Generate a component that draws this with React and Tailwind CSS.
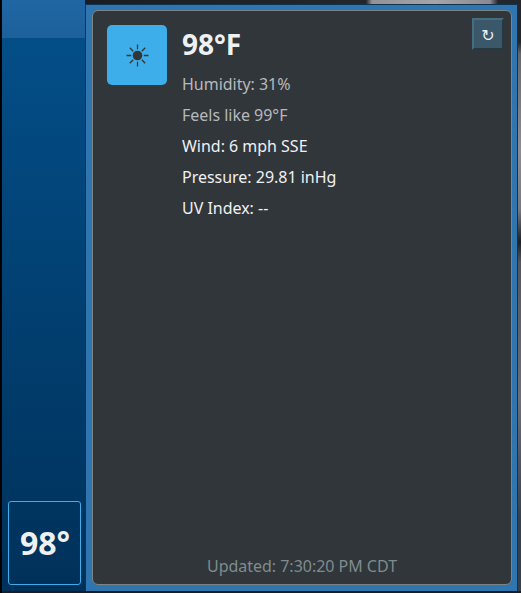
const details = [
  { text: 'Humidity: 31%', muted: true },
  { text: 'Feels like 99°F', muted: true },
  { text: 'Wind: 6 mph SSE' },
  { text: 'Pressure: 29.81 inHg' },
  { text: 'UV Index: --' },
];

function Sun() {
  return (
    <svg viewBox="0 0 23 23" className="mt-px ml-px size-[23px]" stroke="#31363b" strokeWidth="1.3" fill="none">
      <circle cx="11.5" cy="11.5" r="4.8" fill="#31363b" stroke="none" />
      <path d="M11.5 .5v4.7M11.5 17.8v4.7M.5 11.5h4.7M17.8 11.5h4.7M3.8 3.8l3.4 3.4M15.8 15.8l3.4 3.4M3.8 19.2l3.4-3.4M15.8 7.2l3.4-3.4" />
    </svg>
  );
}

function Sidebar() {
  return (
    <aside className="mb-0.5 flex w-[83px] shrink-0 flex-col bg-linear-to-b from-[#04508b] to-[#00315a]">
      <div className="h-[38px] bg-linear-to-b from-[#2066a3] to-[#1c619b]" />
      <div className="mx-1.5 mt-auto mb-1.5 flex h-[84px] w-[73px] items-center justify-center rounded-[3px] border border-[#3daee9] pl-px text-[32px] font-bold">
        98°
      </div>
    </aside>
  );
}

export default function App() {
  return (
    <div className="flex h-[593px] w-[521px] overflow-hidden bg-[#1b1b23] pl-0.5 font-['Noto_Sans',sans-serif] text-base text-[#eff0f1] shadow-[inset_2px_0_#000]">
      <Sidebar />
      <div className="flex w-[433px] shrink-0 flex-col">
        <div className="h-1 shrink-0 bg-[linear-gradient(90deg,#1b1d22_0px,#24262b_275px,#24262b_281px,#939397_287px,#a5a5a9_350px,#8a8a90_405px,#24262d_413px)]" />
        <div className="mb-0.5 flex flex-1 border-x border-t border-[#0d3355] bg-[#2f76b1] pt-[5px] pr-[5px] pb-1.5 pl-1.5">
          <main className="flex flex-1 flex-col rounded-md border border-[#7c8583] bg-[#31363b] px-3.5 pt-3.5">
            <div className="flex">
              <div className="flex size-[60px] shrink-0 items-center justify-center rounded-[5px] bg-[#3daee9]">
                <Sun />
              </div>
              <div className="ml-[15px] flex-1 tracking-[-0.02px]">
                <h1 className="h-11 text-[28px] leading-[38px] font-bold">98°F</h1>
                {details.map(({ text, muted }) => (
                  <p key={text} className={muted ? 'h-[31px] leading-[30px] text-[#b6b9bb]' : 'h-[31px] leading-[30px]'}>
                    {text}
                  </p>
                ))}
              </div>
              <button className="-mt-[7px] -mr-[7px] flex size-8 items-center justify-center border-2 border-t-[#466e83] border-r-[#263943] border-b-[#263943] border-l-[#466e83] bg-[#3b586a] pt-1 font-['DejaVu_Sans',sans-serif] text-base">
                ↻
              </button>
            </div>
            <footer className="mt-auto mb-1.5 text-center leading-6 tracking-[-0.02px] text-[#7f8c8d]">Updated: 7:30:20 PM CDT</footer>
          </main>
        </div>
      </div>
      <div className="mb-0.5 flex-1 bg-[linear-gradient(180deg,#24262d_0px,#24262d_42px,#66676c_54px,#8c8c91_150px,#777780_210px,#1d2028_242px,#55555e_262px,#6d6d78_400px,#35404c_520px)]" />
    </div>
  );
}
